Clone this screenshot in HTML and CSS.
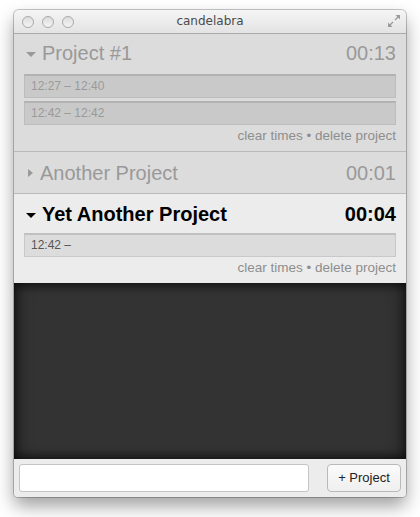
FILE: index.html
```html
<!DOCTYPE html>
<html>
<head>
<meta charset="utf-8">
<link rel="stylesheet" href="styles.css">
</head>
<body>
<div class="window">
  <div class="titlebar">
    <div class="lights"><span class="light"></span><span class="light"></span><span class="light"></span></div>
    <div class="title">candelabra</div>
    <svg class="resize" width="14" height="14" viewBox="0 0 14 14">
      <g fill="none" stroke="#9a9a9a" stroke-width="1.3">
        <path d="M8 6 L12.5 1.5"/><path d="M6 8 L1.5 12.5"/>
      </g>
      <g fill="#9a9a9a">
        <path d="M8.5 1 L13 1 L13 5.5 Z"/><path d="M1 8.5 L1 13 L5.5 13 Z"/>
      </g>
    </svg>
  </div>

  <div class="project open dim">
    <div class="head">
      <span class="tri down"></span>
      <span class="name">Project #1</span>
      <span class="time">00:13</span>
    </div>
    <div class="entries">
      <div class="entry">12:27 – 12:40</div>
      <div class="entry">12:42 – 12:42</div>
    </div>
    <div class="links">clear times • delete project</div>
  </div>

  <div class="project closed dim">
    <div class="head">
      <span class="tri right"></span>
      <span class="name">Another Project</span>
      <span class="time">00:01</span>
    </div>
  </div>

  <div class="project open active">
    <div class="head">
      <span class="tri down"></span>
      <span class="name">Yet Another Project</span>
      <span class="time">00:04</span>
    </div>
    <div class="entries">
      <div class="entry">12:42 –</div>
    </div>
    <div class="links">clear times • delete project</div>
  </div>

  <div class="dark"></div>

  <div class="footer">
    <div class="field"></div>
    <div class="button">+ Project</div>
  </div>
</div>
</body>
</html>
```

FILE: styles.css
```css
html, body {
  margin: 0;
  padding: 0;
  background: #ffffff;
}
body {
  width: 420px;
  height: 517px;
  overflow: hidden;
  font-family: "Liberation Sans", Arial, sans-serif;
}
.window {
  margin: 10px 14px 0 14px;
  width: 392px;
  height: 487px;
  border-radius: 5px 5px 4px 4px;
  box-shadow: 0 0 0 1px rgba(0,0,0,0.22), 0 9px 18px rgba(0,0,0,0.38);
  display: flex;
  flex-direction: column;
  overflow: hidden;
  background: #dcdcdc;
}
.titlebar {
  height: 23px;
  flex: none;
  border-bottom: 1px solid #aaaaaa;
  background: linear-gradient(#f5f5f5, #e3e3e3);
  display: flex;
  align-items: center;
  position: relative;
}
.lights {
  display: flex;
  gap: 8px;
  padding-left: 8px;
}
.light {
  width: 10px;
  height: 10px;
  border-radius: 50%;
  border: 1px solid #a9a9a9;
  background: linear-gradient(#dcdcdc, #f4f4f4);
}
.title {
  position: absolute;
  left: 0;
  right: 0;
  top: 4px;
  text-align: center;
  font-family: "DejaVu Sans", sans-serif;
  font-size: 12px;
  color: #4a4a4a;
}
.resize {
  position: absolute;
  right: 5px;
  top: 4px;
}
.project {
  flex: none;
  border-bottom: 1px solid #b9b9b9;
}
.project.dim { background: #dcdcdc; color: #999999; }
.project.active { background: #ececec; color: #000000; border-bottom: none; }
.head {
  display: flex;
  align-items: center;
  height: 38px;
  padding: 1px 10px 0 12px;
  box-sizing: border-box;
  font-size: 20px;
}
.closed .head { height: 41px; }
.active .head { height: 39px; font-weight: bold; }
.name { flex: 1; }
.tri {
  width: 0;
  height: 0;
  display: inline-block;
}
.tri.down {
  border-left: 5px solid transparent;
  border-right: 5px solid transparent;
  border-top: 5px solid #999999;
  margin-right: 6px;
  margin-top: 2px;
}
.active .tri.down { border-top-color: #000000; }
.tri.right {
  border-top: 4.5px solid transparent;
  border-bottom: 4.5px solid transparent;
  border-left: 5px solid #999999;
  margin-left: 2px;
  margin-right: 7px;
}
.entries {
  display: flex;
  flex-direction: column;
  gap: 3px;
  padding: 0 10px;
  margin-top: 2px;
}
.active .entries { margin-top: 0; }
.entry {
  box-sizing: border-box;
  height: 24px;
  border: 1px solid #bcbcbc;
  border-top: 2px solid #b2b2b2;
  background: #c9c9c9;
  font-size: 12px;
  line-height: 20px;
  padding-left: 6px;
  color: #9a9a9a;
}
.active .entry {
  background: #dcdcdc;
  border-color: #c8c8c8;
  border-top-color: #c0c0c0;
  color: #555555;
}
.links {
  height: 22px;
  line-height: 22px;
  text-align: right;
  padding: 0 10px 4px 0;
  font-size: 13.5px;
  color: #8e8e8e;
}
.dark {
  flex: 1;
  background: #333333;
  box-shadow: inset 0 6px 8px -2px rgba(0,0,0,0.5), inset 0 -6px 8px -2px rgba(0,0,0,0.5), inset 14px 0 16px -10px rgba(0,0,0,0.45), inset -14px 0 16px -10px rgba(0,0,0,0.45);
}
.footer {
  flex: none;
  height: 38px;
  background: #ececec;
  display: flex;
  align-items: center;
  justify-content: space-between;
  padding: 0 5px;
}
.field {
  width: 290px;
  height: 28px;
  box-sizing: border-box;
  background: #ffffff;
  border: 1px solid #c4c4c4;
  border-radius: 3px;
}
.button {
  width: 74px;
  height: 28px;
  box-sizing: border-box;
  border: 1px solid #b9b9b9;
  border-radius: 4px;
  background: linear-gradient(#fbfbfb, #efefef);
  font-size: 13px;
  line-height: 26px;
  text-align: center;
  color: #222222;
}
```
